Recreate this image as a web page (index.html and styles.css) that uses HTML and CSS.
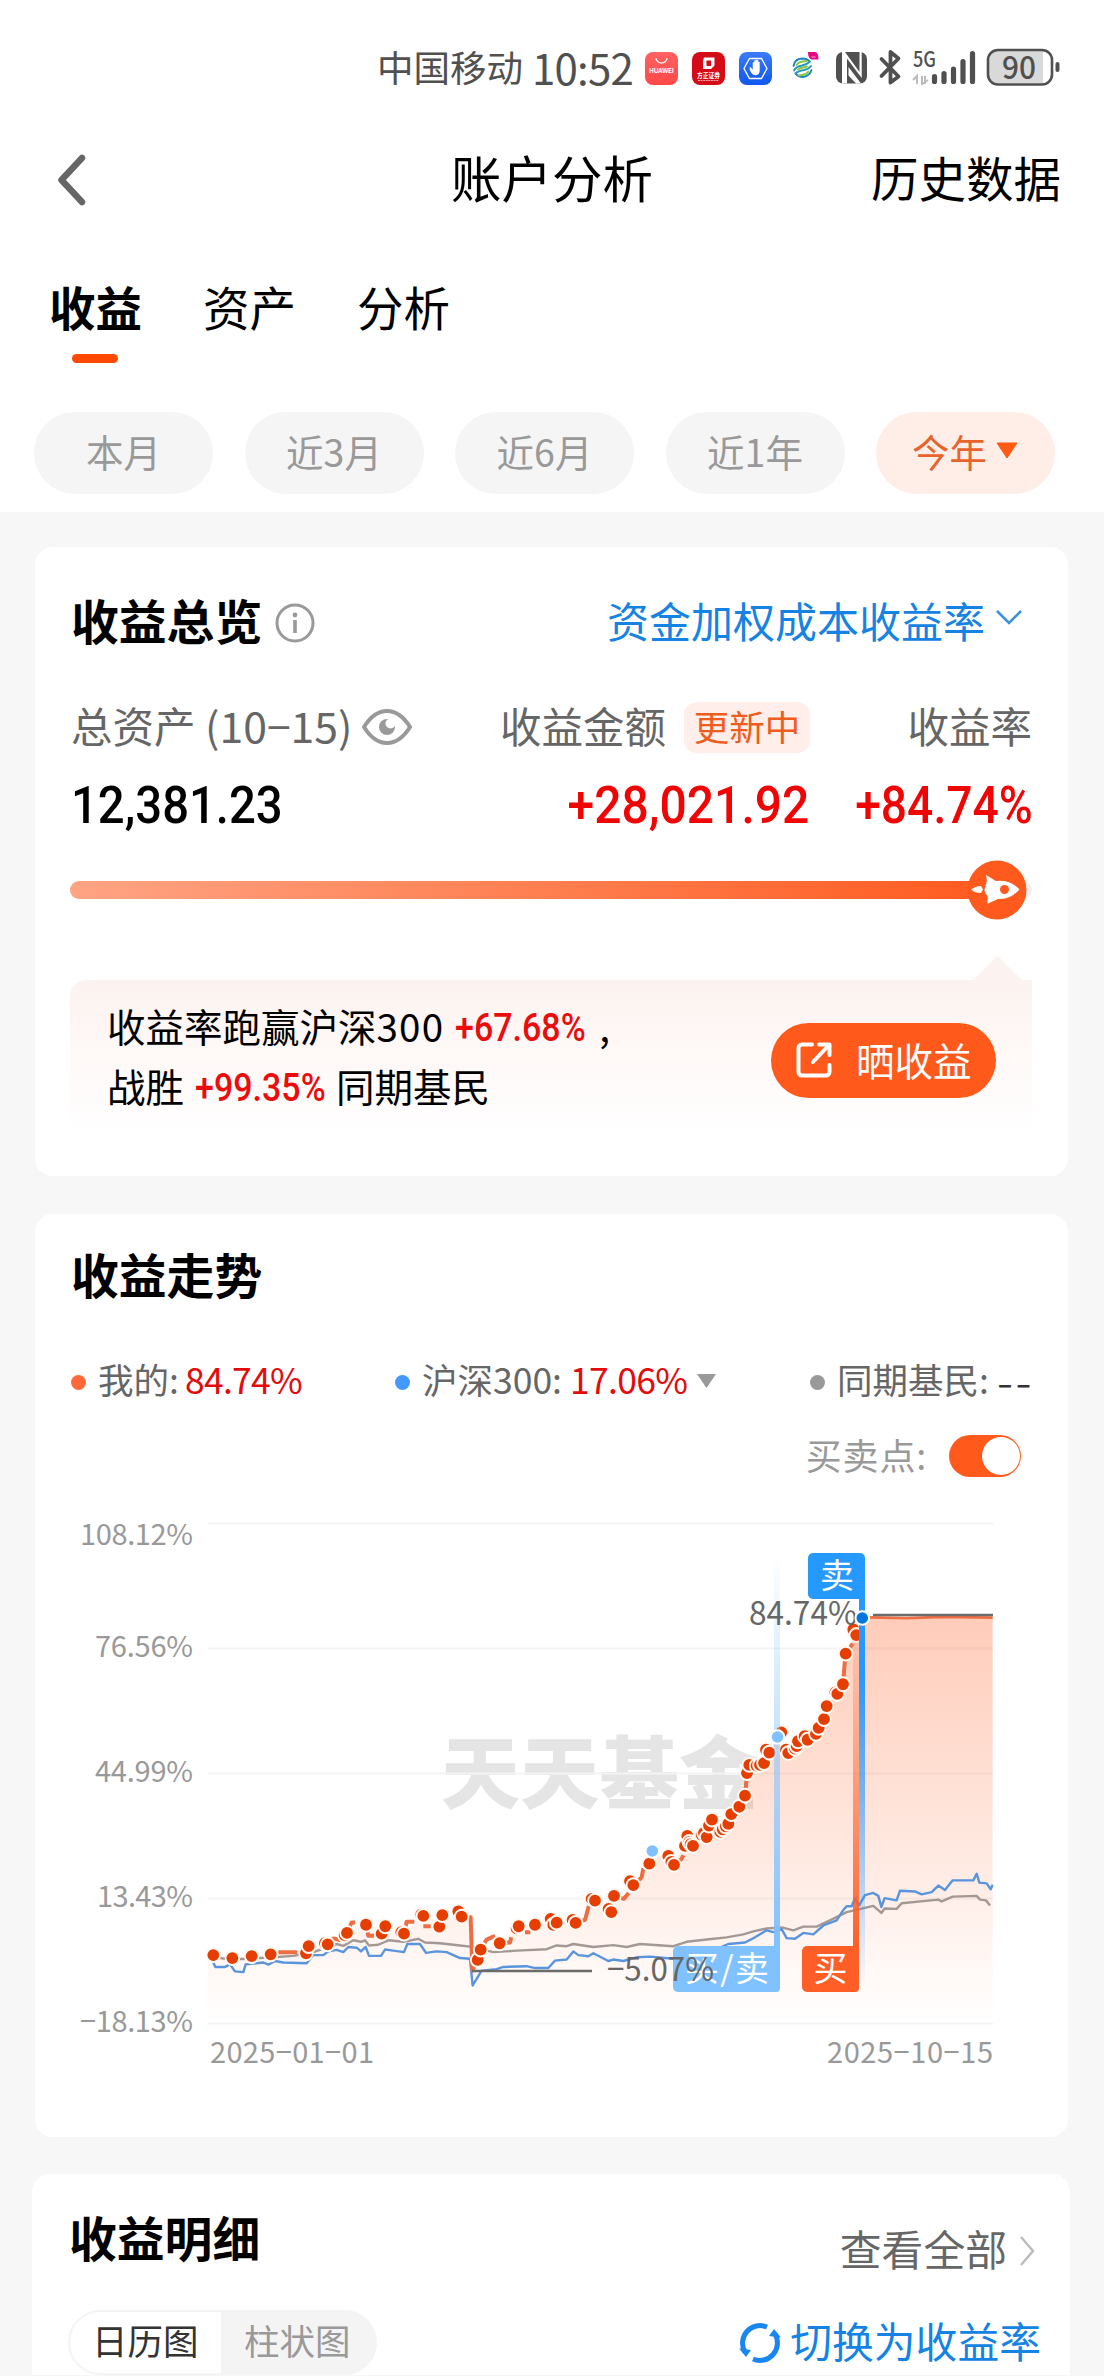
FILE: index.html
```html
<!DOCTYPE html>
<html lang="zh-CN">
<head>
<meta charset="utf-8">
<title>账户分析</title>
<link rel="stylesheet" href="styles.css">
</head>
<body>
<div class="top">
  <div class="status">
    <span class="carrier">中国移动</span>
    <span class="clock">10:52</span>
    <svg class="tray" width="430" height="76" viewBox="640 30 430 76">
      <defs>
        <linearGradient id="hw" x2="0" y2="1"><stop offset="0" stop-color="#ff6262"/><stop offset="1" stop-color="#ff4848"/></linearGradient>
        <linearGradient id="hd" x2="0" y2="1"><stop offset="0" stop-color="#3a7cf8"/><stop offset="1" stop-color="#1156ee"/></linearGradient>
      </defs>
      <rect x="645" y="52" width="33" height="33" rx="8" fill="url(#hw)"/>
      <path d="M656 58a5.500 5 0 0 0 11 0" fill="none" stroke="#fff" stroke-width="1.200"/>
      <text x="649" y="73" class="app-name" font-size="6.500" textLength="25">HUAWEI</text>
      <rect x="692" y="52" width="33" height="33" rx="8" fill="#d50b18"/>
      <path d="M704 57.500h10.500v8l-3.500 3.500h-8v-8zM706.500 60.500v5.500h4.500v-5.500z" fill="#fff" fill-rule="evenodd"/>
      <text x="697" y="77.500" class="app-name" font-size="7" textLength="23" lengthAdjust="spacingAndGlyphs">方正证券</text>
      <path d="M698 80.500h21" stroke="#f4a5aa" stroke-width="1" stroke-dasharray="2 .6"/>
      <rect x="739" y="52" width="33" height="33" rx="8" fill="url(#hd)"/>
      <path d="M749.500 58.500h12l5.500 10-5.500 10h-12l-5.500-10z" fill="none" stroke="#fff" stroke-width="1.300"/>
      <path d="M750 67l3 3v-7.500h1.600v5v-7h1.600v7v-7.500h1.600v7.500v-5.500h1.600V71q0 4-4 4-3.400 0-5.400-5z" fill="#fff" stroke="#fff" stroke-width=".5"/>
      <g fill="none" stroke-width="1.800" stroke-linecap="round">
        <path d="M793.500 66q1-7 8.500-7.500 5 0 7.500 3M811.500 70q-1.500 6-8.500 7-5 0-7.500-3.500" stroke="#1784c4"/>
        <path d="M794 70.500q2-4 8-5 5-1 8-4M811 66q-2 3-7 4-6 1-8.500 3.500" stroke="#2496bd"/>
        <path d="M796.500 65q2-3 6-3.500l4-.5M808.500 71.500q-2 3-6 3.500l-4 .5M798 69.500q2-1.500 9-3" stroke="#8bc63f"/>
      </g>
      <path d="M808 52h7q3.500 0 3.500 7.500h-7q-3.500-1-3.500-7.500z" fill="#e5097f"/>
      <path d="M811.500 57h4" stroke="#f9a8d4"/>
      <rect x="836" y="52" width="31" height="31.500" rx="7" fill="#505050"/>
      <path d="M843 82.500V53.500L861 81M860.500 53.500V82L843 54" fill="none" stroke="none"/>
      <path d="M842 52h3l14.500 20V52h2.200v26L847 58.500v25h-5zM848.500 67l12.500 16.500h-5l-7.500-8z" fill="#fff"/>
      <path d="M881.500 59l17 17.500-8 6V52l8 6.500-17 17.500" fill="none" stroke="#505050" stroke-width="3.800" stroke-linejoin="round" stroke-linecap="round"/>
      <text x="913" y="67" class="net" font-size="21.500" textLength="23" lengthAdjust="spacingAndGlyphs">5G</text>
      <path d="M913 80l4-4v8M925 84v-8M922 76v8l6-4" fill="none" stroke="#bbb" stroke-width="2"/>
      <path d="M934.500 76.500v5M944 73.500v8M953.500 69v12.500M963 61.500v20M972.500 53.500v28" stroke="#505050" stroke-width="5.200" stroke-linecap="round"/>
      <path d="M997 51h46v32.500h-46a9 9 0 0 1-9-9V60a9 9 0 0 1 9-9z" fill="#d9d9d9"/>
      <rect x="988" y="50" width="64" height="34.500" rx="10" fill="none" stroke="#505050" stroke-width="2.600"/>
      <path d="M1057.500 64v6" stroke="#505050" stroke-width="4" stroke-linecap="round"/>
      <text x="1002" y="79" class="net" font-size="31" textLength="34" lengthAdjust="spacingAndGlyphs">90</text>
    </svg>
  </div>
  <div class="nav">
    <svg width="30" height="52" viewBox="0 0 30 52"><path d="M25 4L4.500 26 25 48" fill="none" stroke="#666" stroke-width="6.500" stroke-linecap="round" stroke-linejoin="round"/></svg>
    <h1>账户分析</h1>
    <span class="history">历史数据</span>
  </div>
  <div class="tabs"><b class="on">收益</b><span>资产</span><span>分析</span></div>
  <div class="pills">
    <span>本月</span><span>近3月</span><span>近6月</span><span>近1年</span>
    <span class="sel">今年<svg width="24" height="17" viewBox="0 0 24 17"><path d="M2 1h20L12 16z" fill="#ff5a14" stroke="#ff5a14" stroke-linejoin="round"/></svg></span>
  </div>
</div>

<section class="card overview">
  <div class="head">
    <h2>收益总览</h2>
    <svg class="info" width="40" height="40" viewBox="0 0 40 40"><circle cx="20" cy="20" r="18" fill="none" stroke="#999" stroke-width="3"/><circle cx="20" cy="12" r="2.400" fill="#999"/><path d="M20 17v13" stroke="#999" stroke-width="3.600"/></svg>
    <span class="method">资金加权成本收益率</span>
    <svg width="28" height="18" viewBox="0 0 28 18"><path d="M2 2l12 12L26 2" fill="none" stroke="#3d8fe0" stroke-width="2.600"/></svg>
  </div>
  <div class="labels">
    <span class="asset">总资产 <i>(10−15)</i></span>
    <svg class="eye" width="50" height="38" viewBox="0 0 50 38"><path d="M2 19Q12 3 25 3t23 16Q38 35 25 35T2 19z" fill="none" stroke="#999" stroke-width="4"/><circle cx="25" cy="19" r="8" fill="#999"/><circle cx="28.500" cy="15.500" r="5" fill="#fff"/></svg>
    <span class="gain">收益金额</span><span class="badge">更新中</span><span class="rate">收益率</span>
  </div>
  <div class="values">
    <span class="v v1"><b>12,381.23</b></span>
    <span class="v v2"><b>+28,021.92</b></span>
    <span class="v v3"><b>+84.74%</b></span>
  </div>
  <svg class="track" width="962" height="62" viewBox="70 859 962 62">
    <defs><linearGradient id="tr"><stop offset="0" stop-color="#ffa484"/><stop offset="1" stop-color="#ff5a1e"/></linearGradient></defs>
    <rect x="70" y="881" width="962" height="18" rx="9" fill="#f0f0f0"/>
    <rect x="70" y="881" width="932" height="18" rx="9" fill="url(#tr)"/>
    <circle cx="997" cy="890" r="29.500" fill="#ff5a1e"/>
    <path d="M971 889.500q5-4 10-3.500l2 3.500-2 3.500q-6 0-10-3.500zM985 886q3-3 1-11l10 6q14-2 23.500 8.500Q1010 900 998 899l-11 5q2-8-1-10-3-4 0-8z" fill="#fff"/>
    <circle cx="1004.500" cy="889.500" r="4.500" fill="#ff5a1e"/>
  </svg>
  <div class="tip">
    <svg class="arrow" width="60" height="34" viewBox="0 0 60 34"><path d="M1 24L24 1q1.500-1 3 0L60 34V24z" fill="#fcf3f0"/></svg>
    <div class="lines">
      <p>收益率跑赢沪深<span class="n300">300</span><em><b>+67.68%</b></em><span class="comma">,</span></p>
      <p>战胜<em><b>+99.35%</b></em>同期基民</p>
    </div>
    <div class="share"><svg width="36" height="36" viewBox="0 0 36 36"><path d="M16 2.500H6A3.500 3.500 0 0 0 2.500 6v24A3.500 3.500 0 0 0 6 33.500h24a3.500 3.500 0 0 0 3.500-3.500v-7M23 2.500h10.500V13M32.500 3.500L17 20" fill="none" stroke="#fff" stroke-width="4" stroke-linecap="round" stroke-linejoin="round"/></svg>晒收益</div>
  </div>
</section>

<section class="card trend">
  <h2>收益走势</h2>
  <div class="legend">
    <span class="item mine"><i></i><span>我的:</span><strong>84.74%</strong></span>
    <span class="item index"><i></i><span>沪深300:</span><strong>17.06%</strong><svg width="21" height="16" viewBox="0 0 21 16"><path d="M1 1h19l-9.500 14z" fill="#999"/></svg></span>
    <span class="item peers"><i></i><span>同期基民:</span><u>--</u></span>
  </div>
  <div class="switch"><span>买卖点:</span><span class="toggle"></span></div>
  <svg class="chart" width="1033" height="590" viewBox="35 1500 1033 590">
    <defs>
      <linearGradient id="area" gradientUnits="userSpaceOnUse" x1="0" y1="310" x2="0" y2="1414"><stop offset="0" stop-color="#ff5a1e" stop-opacity=".31"/><stop offset=".5" stop-color="#ff5a1e" stop-opacity=".16"/><stop offset="1" stop-color="#ff5a1e" stop-opacity="0"/></linearGradient>
      <linearGradient id="sky" x2="0" y2="1"><stop offset="0" stop-color="#80c2ff" stop-opacity="0"/><stop offset="1" stop-color="#80c2ff"/></linearGradient>
      <linearGradient id="buy" x2="0" y2="1"><stop offset="0" stop-color="#ff5e26" stop-opacity="0"/><stop offset="1" stop-color="#ff5e26"/></linearGradient>
      <linearGradient id="sell" x2="0" y2="1"><stop offset="0" stop-color="#2699ff"/><stop offset=".2" stop-color="#2699ff"/><stop offset="1" stop-color="#2699ff" stop-opacity="0"/></linearGradient>
      <marker id="dot" markerUnits="userSpaceOnUse" markerWidth="60" markerHeight="60" refX="30" refY="30"><ellipse cx="30" cy="30" rx="20.500" ry="18.700" fill="#e63d00" stroke="#fff8f3" stroke-width="5.500"/></marker>
    </defs>
    <text x="441" y="1803" class="watermark" font-size="79" textLength="317">天天基金</text>
    <path d="M208 1523.500h785M208 1648.500h785M208 1773.500h785M208 1898.500h785M208 2023.500h785" stroke="#f4f4f4" stroke-width="2"/>
    <g class="axis">
      <text x="80" y="1545" textLength="113">108.12%</text>
      <text x="95" y="1657" textLength="98">76.56%</text>
      <text x="95" y="1782" textLength="98">44.99%</text>
      <text x="97" y="1907" textLength="96">13.43%</text>
      <text x="80" y="2032" textLength="113">−18.13%</text>
      <text x="210" y="2063" textLength="164">2025−01−01</text>
      <text x="827" y="2063" textLength="166">2025−10−15</text>
    </g>
    <g transform="translate(60 1500) scale(.33333 .37)" fill="none">
      <path fill="url(#area)" d="M444 1414V1230L517 1238 632 1228 738 1222 803 1201 861 1170 918 1148 976 1160 1032 1172 1090 1124 1138 1140 1205 1118 1232 1128 1236 1272 1262 1215 1319 1198 1376 1152 1490 1142 1575 1135 1605 1083 1654 1100 1720 1041 1768 983 1777 949 1842 986 1882 915 1940 905 1956 864 2005 875 2055 799 2061 738 2112 711 2153 640 2185 684 2243 648 2292 592 2300 557 2349 498 2357 415 2389 365 2407 319 2798 318V1414z"/>
      <path class="line grey" d="M460 1236L517 1242 640 1236 700 1232 760 1222 830 1200 850 1205 880 1190 903 1194 915 1190 927 1204 955 1202 985 1190 1030 1194 1075 1186 1095 1196 1140 1198 1200 1204 1230 1207 1300 1222 1370 1218 1460 1214 1490 1204 1520 1206 1540 1200 1600 1208 1660 1203 1700 1208 1740 1200 1840 1206 1880 1194 1940 1188 2000 1182 2050 1174 2080 1166 2120 1158 2165 1155 2200 1163 2230 1153 2270 1153 2310 1136 2360 1114 2440 1097 2464 1116 2474 1104 2510 1105 2525 1090 2635 1080 2645 1085 2678 1072 2750 1070 2760 1080 2778 1082 2790 1096"/>
      <path class="line blue" d="M460 1250L466 1262 495 1262 510 1255 525 1274 550 1276 557 1255 610 1250 625 1256 645 1246 670 1250 740 1252 760 1230 790 1230 805 1220 830 1216 850 1222 865 1208 890 1210 903 1220 917 1208 927 1232 963 1232 975 1215 1000 1218 1032 1222 1042 1200 1080 1200 1098 1224 1130 1220 1160 1222 1200 1238 1230 1240 1238 1312 1265 1272 1310 1268 1330 1262 1400 1260 1425 1265 1465 1265 1485 1245 1520 1242 1540 1220 1555 1230 1585 1233 1600 1225 1645 1246 1660 1242 1690 1246 1730 1236 1770 1234 1840 1240 1872 1238 1885 1214 1910 1222 1950 1212 1985 1208 2005 1200 2055 1196 2085 1182 2120 1163 2140 1168 2165 1160 2180 1184 2205 1186 2230 1170 2260 1174 2290 1150 2330 1136 2350 1108 2360 1098 2375 1098 2385 1076 2397 1096 2415 1068 2440 1062 2455 1070 2464 1100 2474 1076 2510 1082 2520 1056 2565 1058 2585 1066 2615 1060 2635 1042 2655 1054 2678 1028 2740 1028 2750 1010 2758 1034 2780 1036 2792 1052 2798 1040"/>
      <path class="line red" d="M655 1222h57M803 1201L820 1185 845 1190M861 1170L875 1142 885 1142M918 1148L925 1178 942 1178M1032 1172L1040 1140 1063 1140M1090 1152h22M1205 1126L1232 1128 1237 1272 1253 1243M1262 1215L1280 1188 1305 1178M1319 1198L1350 1196 1354 1182M1395 1168h16M1547 1143L1575 1135 1587 1095M1662 1070L1692 1078 1706 1062M1720 1041L1745 1020 1750 995M1842 986L1865 970 1870 960M2055 799L2060 750M2349 498L2355 430M2357 415L2378 388"/>
      <path class="line red thin" d="M2425 317L2540 319 2650 316 2798 318"/>
      <path class="dots" d="M460 1230L517 1238 575 1233 632 1228 738 1225 746 1206 795 1198 803 1201 854 1176 861 1170 918 1148 965 1172 976 1152 1024 1168 1032 1172 1084 1120 1090 1124 1138 1153 1147 1122 1195 1112 1205 1126M1253 1243L1262 1215 1319 1198 1370 1158 1376 1152 1425 1148 1472 1132 1480 1148 1490 1142 1538 1135 1547 1143 1595 1078 1605 1083 1646 1105 1654 1114 1662 1070 1710 1030 1720 1041 1768 983 1825 962 1834 978 1842 986 1875 935 1882 908 1888 924 1892 930 1899 935 1925 905 1932 900 1940 911 1947 880 1956 864 1981 897 1988 890 1997 882 2005 875 2014 849 2038 829 2055 799 2061 738 2068 716 2090 718 2100 716 2112 711 2118 675 2128 683 2164 628 2178 675 2185 684 2205 672 2210 665 2214 652 2234 638 2243 648 2268 632 2276 616 2292 592 2300 557 2326 520 2332 524 2349 498 2357 415 2380 350 2389 365"/>
    </g>
    <rect x="774" y="1555" width="6" height="391" fill="url(#sky)"/>
    <rect x="853" y="1598" width="6" height="350" fill="url(#buy)"/>
    <rect x="859" y="1598" width="6" height="390" fill="url(#sell)"/>
    <path d="M678 1946h102v42a4 4 0 0 1-4 4h-98a5 5 0 0 1-5-5v-36a5 5 0 0 1 5-5z" fill="#80c2ff"/>
    <path d="M807 1946h52v42a4 4 0 0 1-4 4h-48a5 5 0 0 1-5-5v-36a5 5 0 0 1 5-5z" fill="#ff5e26"/>
    <path d="M813 1553h47a5 5 0 0 1 5 5v41h-52a5 5 0 0 1-5-5v-36a5 5 0 0 1 5-5z" fill="#2699ff"/>
    <g class="flag"><text x="685" y="1981" textLength="84">买/卖</text><text x="813.500" y="1981">买</text><text x="820" y="1588">卖</text></g>
    <path d="M873 1615h120M472 1971h120" stroke="#6b6b6b" stroke-width="2.600"/>
    <g class="mark"><text x="749" y="1625" textLength="108" lengthAdjust="spacingAndGlyphs">84.74%</text><text x="607" y="1981" textLength="107" lengthAdjust="spacingAndGlyphs">−5.07%</text></g>
    <g stroke="#fff" stroke-width="2"><circle cx="652.300" cy="1851" r="6.800" fill="#80c2ff"/><circle cx="777.500" cy="1737" r="6.800" fill="#80c2ff"/><circle cx="862.300" cy="1618" r="6.800" fill="#0076e0"/></g>
  </svg>
</section>

<section class="card detail">
  <div class="head"><h2>收益明细</h2><span class="all">查看全部</span><svg width="16" height="32" viewBox="0 0 16 32"><path d="M2 2l12 14L2 30" fill="none" stroke="#bbb" stroke-width="2.400"/></svg></div>
  <div class="row">
    <div class="seg"><span class="on">日历图</span><span>柱状图</span></div>
    <svg width="44" height="44" viewBox="0 0 44 44"><g fill="none" stroke="#1a86f0" stroke-width="5"><path d="M7 31A17.500 17.500 0 0 1 29 6"/><path d="M37 13A17.500 17.500 0 0 1 15 38"/></g><path d="M1 27.500l12 1.500-5 7zM43 16.500L31 15l5-7z" fill="#1a86f0"/></svg>
    <span class="convert">切换为收益率</span>
  </div>
</section>
</body>
</html>
```
FILE: styles.css
```css
* { box-sizing: border-box; }
body { margin: 0; height: 2376px; overflow: hidden; background: #f7f7f7; color: #000; font-family: "Noto Sans CJK SC", sans-serif; }
h1, h2, p { margin: 0; }
svg { display: block; flex: none; }
span, h1, h2, p, b { white-space: nowrap; }
i, em, u { font-style: normal; text-decoration: none; }

.top { height: 512px; background: #fff; }
.status { display: flex; align-items: center; height: 90px; padding: 46px 0 0 377px; color: #505050; }
.carrier { width: 155px; font-size: 36.500px; line-height: 44px; margin-top: -3px; }
.clock { width: 108px; font-size: 42px; line-height: 44px; letter-spacing: -.8px; margin-top: -2px; }
.app-name { fill: #fff; font-weight: 700; }
.net { fill: #505050; font-weight: 500; }

.nav { display: grid; grid-template-columns: 1fr 204px 1fr; align-items: center; height: 96px; margin-top: 42px; padding: 0 43px 0 57px; }
.nav h1 { font-size: 50.500px; font-weight: 400; line-height: 60px; margin: -8px 0 0 -6px; }
.history { justify-self: end; font-size: 47.500px; line-height: 60px; margin-top: -6px; }

.tabs { display: flex; gap: 61px; height: 104px; margin-top: 28px; padding: 17px 0 0 49px; font-size: 46.500px; line-height: 66px; }
.tabs .on::after { content: ""; display: block; width: 46px; height: 9px; margin: 15px 0 0 23px; border-radius: 4.500px; background: #ff4a00; }
.pills { display: flex; gap: 31.500px; margin-top: 52px; padding-left: 34px; }
.pills span { display: flex; align-items: center; justify-content: center; gap: 8px; width: 179px; height: 82px; border-radius: 41px; background: #f5f5f5; color: #999; font-size: 37.500px; line-height: 76px; padding-bottom: 5px; }
.pills .sel { background: #ffeee8; color: #e8642c; }

.card { width: 1033px; margin: 35px 0 0 35px; border-radius: 18px; background: #fff; }
.head { display: flex; align-items: center; }
h2 { position: relative; font-size: 47.800px; line-height: 56px; padding-bottom: 4px; font-weight: 700; }

.overview { height: 629px; padding: 45px 36px 0; overflow: hidden; }
.info { margin: 1px auto 0 13px; }
.method { color: #1583e4; font-size: 42px; line-height: 56px; padding-bottom: 4px; margin-right: 10px; }
.overview .head > svg:last-child { margin-right: 9px; margin-top: -8px; }
.labels { display: flex; align-items: center; height: 60px; margin-top: 45px; color: #666; font-size: 41.500px; line-height: 54px; }
.labels > span { padding-bottom: 4px; }
.asset { width: 291px; }
.asset i { display: inline-block; transform: scaleX(1.03); transform-origin: left; }
.gain { margin-left: 88px; width: 184px; }
.labels .badge { width: 126px; height: 51px; padding: 0; border-radius: 13px; background: #ffeee9; color: #ee5d20; font-size: 35.500px; line-height: 47px; text-align: center; }
.rate { margin-left: auto; }
.values { display: grid; grid-template-columns: 260px 478px 224px; height: 60px; margin-top: 18px; font-family: Roboto, sans-serif; font-size: 52.500px; line-height: 60px; }
.v b { display: inline-block; font-weight: 500; transform: scaleX(.9); transform-origin: left; }
.v2, .v3 { color: #f00505; text-align: right; }
.v2 b, .v3 b { transform-origin: right; }
.v2 b { transform: scaleX(.915); }
.v3 b { transform: scaleX(.88); }
.track { margin: 24px 0 0 -1px; }
.tip { position: relative; display: flex; justify-content: space-between; width: 962px; height: 156px; margin: 59px 0 0 -1px; padding: 17px 36px 0 37px; border-radius: 16px 0 0; background: linear-gradient(#fcf3f0, #fef7f5 35%, #fff); }
.arrow { position: absolute; top: -24px; right: 0; }
.lines { margin-top: -2px; }
.lines p { display: flex; font-size: 38.500px; line-height: 60px; }
.n300 { letter-spacing: 1.2px; }
.lines em { width: 131px; margin: 0 10px 0 11px; color: #e90d0d; font: 500 38px/66px Roboto, sans-serif; height: 60px; }
.lines em b { display: inline-block; font-weight: 500; transform: scaleX(.895); transform-origin: left; }
.comma { margin-left: 3px; }
.share { display: flex; align-items: center; gap: 24px; width: 225px; height: 75px; margin-top: 26px; padding: 0 0 2px 25px; border-radius: 38px; background: #ff5a1b; color: #fff; font-size: 38.500px; line-height: 70px; padding-bottom: 4px; }
.share svg { margin-top: 3px; }

.trend { height: 923px; margin-top: 38px; padding: 32px 36px 0; }
.legend { display: grid; grid-template-columns: 324px 415px auto; height: 50px; margin: 50px 0 0 0; color: #666; font-size: 35.500px; line-height: 44px; }
.item { display: flex; align-items: center; }
.item > span, .item > strong { padding-bottom: 4px; }
.item > i { width: 15px; height: 15px; margin: 2px 12px 0 0; border-radius: 50%; background: #ff6a38; }
.item strong { margin-left: 6px; color: #e30b0b; font-weight: 400; letter-spacing: -.7px; }
.index strong { margin-left: 8px; }
.item svg { margin-left: 9px; }
.item u { margin-left: 8px; color: #333; transform: scaleX(1.3); transform-origin: left; letter-spacing: 2px; }
.index > i { background: #4399ff; }
.peers > i { background: #999; }
.switch { display: flex; align-items: center; justify-content: flex-end; height: 50px; margin: 25px 11px 0 0; color: #999; font-size: 36px; line-height: 46px; letter-spacing: .8px; }
.switch > span:first-child { padding-bottom: 5px; }
.toggle { width: 72px; height: 42px; margin-left: 22px; border-radius: 21px; background: #ff5a1b; padding: 2px; }
.toggle::after { content: ""; display: block; width: 38px; height: 38px; margin-left: 31px; border-radius: 50%; background: #fff; }
.chart { margin: 19px 0 0 -36px; }
.watermark { fill: #e5e5e5; font-weight: 900; }
.axis { fill: #999; font-size: 29px; }
.mark { fill: #666; font-size: 33px; }
.flag { fill: #fff; font-size: 34px; }
.line { stroke-width: 2.400px; vector-effect: non-scaling-stroke; stroke-linejoin: round; }
.grey { stroke: #a49894; }
.blue { stroke: #5a94dc; }
.red { stroke: #ef6d42; stroke-width: 4px; }
.thin { stroke-width: 2.800px; }
.dots { marker-start: url(#dot); marker-mid: url(#dot); marker-end: url(#dot); }

.detail { width: 1038px; height: 201px; margin: 37px 0 0 32px; padding: 36px 29px 0 37px; border-radius: 18px 18px 0 0; }
.all { margin: 8px 12px 0 auto; color: #666; font-size: 41.800px; line-height: 60px; }
.detail .head { height: 67px; }
.detail .head > h2 { margin-top: -9px; }
.detail .head > svg { margin: 14px 6px 0 0; }
.row { display: flex; align-items: center; margin-top: 33px; }
.seg { display: flex; width: 309px; height: 65px; margin: 0 auto 0 -1px; border: 2px solid #f4f4f4; border-radius: 33px; background: #f4f4f4; color: #999; overflow: hidden; font-size: 35.500px; line-height: 56px; }
.seg span { flex: 1; padding-left: 23px; }
.seg .on { flex: none; width: 151px; background: #fff; color: #333; padding-left: 22px; }
.convert { margin-left: 8px; color: #1583e4; font-size: 41.800px; line-height: 56px; padding-bottom: 5px; }
```
